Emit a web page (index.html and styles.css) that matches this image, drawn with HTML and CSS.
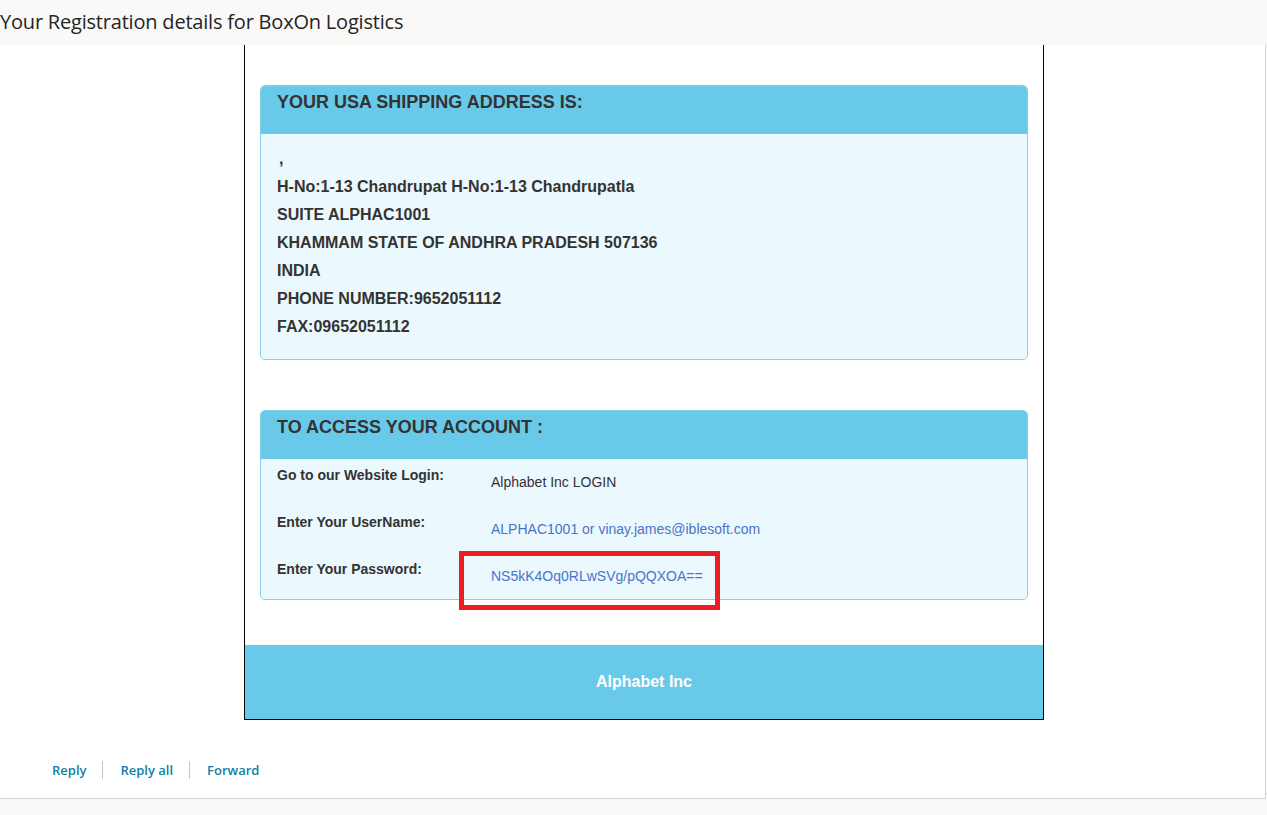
FILE: index.html
```html
<!DOCTYPE html>
<html>
<head>
<meta charset="utf-8">
<title>Your Registration details for BoxOn Logistics</title>
<link rel="stylesheet" href="styles.css">
</head>
<body>
<header class="subject-bar">
  <h1 class="subject">Your Registration details for BoxOn Logistics</h1>
</header>
<main class="reading-pane">
  <div class="mail-body">
    <div class="mail-frame">
      <section class="card card-address">
        <h3 class="card-head">YOUR USA SHIPPING ADDRESS IS:</h3>
        <div class="card-body address">
          <p><span class="lead-gap"></span>,</p>
          <p>H-No:1-13 Chandrupat H-No:1-13 Chandrupatla</p>
          <p>SUITE ALPHAC1001</p>
          <p>KHAMMAM STATE OF ANDHRA PRADESH 507136</p>
          <p>INDIA</p>
          <p>PHONE NUMBER:9652051112</p>
          <p>FAX:09652051112</p>
        </div>
      </section>
      <section class="card card-account">
        <h3 class="card-head">TO ACCESS YOUR ACCOUNT :</h3>
        <div class="card-body account">
          <div class="row">
            <span class="label">Go to our Website Login:</span>
            <span class="value dark">Alphabet Inc LOGIN</span>
          </div>
          <div class="row">
            <span class="label">Enter Your UserName:</span>
            <span class="value link">ALPHAC1001 or vinay.james@iblesoft.com</span>
          </div>
          <div class="row">
            <span class="label">Enter Your Password:</span>
            <span class="value link">NS5kK4Oq0RLwSVg/pQQXOA==</span>
          </div>
          <div class="highlight"></div>
        </div>
      </section>
      <footer class="mail-footer">Alphabet Inc</footer>
    </div>
  </div>
  <nav class="actions">
    <a class="action" href="#">Reply</a>
    <a class="action" href="#">Reply all</a>
    <a class="action" href="#">Forward</a>
  </nav>
</main>
</body>
</html>
```
FILE: styles.css
```css
html, body {
  margin: 0;
  padding: 0;
}
body {
  background: #faf9f8;
  width: 1267px;
  height: 815px;
  overflow: hidden;
  font-family: "Liberation Sans", Arial, sans-serif;
}
.subject-bar {
  height: 45px;
  background: #faf9f8;
  box-sizing: border-box;
  padding-top: 9px;
}
.subject {
  margin: 0;
  font-family: "Open Sans", "Noto Sans", sans-serif;
  font-weight: 500;
  font-size: 20px;
  line-height: 26px;
  color: #242424;
  white-space: nowrap;
  letter-spacing: -0.2px;
}
.reading-pane {
  width: 1266px;
  height: 754px;
  box-sizing: border-box;
  background: #ffffff;
  border-right: 1px solid #d2d0ce;
  border-bottom: 1px solid #d2d0ce;
  display: flex;
  flex-direction: column;
}
.mail-body {
  padding-left: 244px;
}
.mail-frame {
  width: 800px;
  box-sizing: border-box;
  border: 1px solid #000;
  border-top: none;
  padding-top: 40px;
  display: flex;
  flex-direction: column;
}
.card {
  margin: 0 15px;
  border: 1px solid #86cfec;
  border-radius: 5px;
  overflow: hidden;
  background: #ebf8fd;
  position: relative;
}
.card-account {
  margin-top: 50px;
  overflow: visible;
}
.card-head {
  margin: 0;
  height: 48px;
  box-sizing: border-box;
  background: #69c9e9;
  color: #333333;
  font-size: 18px;
  font-weight: bold;
  line-height: 20px;
  padding: 6px 16px 0 16px;
  border-radius: 4px 4px 0 0;
}
.card-body {
  color: #333333;
}
.address {
  padding: 11px 16px 18px;
}
.address p {
  margin: 0;
  font-size: 16px;
  font-weight: bold;
  line-height: 28px;
}
.lead-gap {
  display: inline-block;
  width: 2px;
}
.account {
  padding: 8px 16px 15px;
  display: flex;
  flex-direction: column;
  gap: 24px;
  border-radius: 0 0 4px 4px;
}
.row {
  display: flex;
  height: 23px;
  font-size: 14px;
  line-height: 16px;
}
.label {
  width: 214px;
  font-weight: bold;
  color: #333333;
}
.value {
  padding-top: 7px;
}
.value.dark {
  color: #333333;
}
.value.link {
  color: #4a74c9;
}
.highlight {
  position: absolute;
  left: 198px;
  top: 140px;
  width: 261px;
  height: 59px;
  box-sizing: border-box;
  border: 5px solid #ec1c24;
}
.mail-footer {
  margin-top: 45px;
  height: 74px;
  background: #69c9e9;
  color: #ffffff;
  font-weight: bold;
  font-size: 16px;
  display: flex;
  align-items: center;
  justify-content: center;
}
.actions {
  display: flex;
  align-items: center;
  margin-top: 41px;
  padding-left: 36px;
}
.action {
  font-family: "Open Sans", "Noto Sans", sans-serif;
  font-size: 13px;
  font-weight: 600;
  line-height: 18px;
  color: #0f7fa6;
  text-decoration: none;
  padding: 0 16px 0 17px;
  border-left: 1px solid #c8c6c4;
}
.action:first-child {
  border-left: none;
  padding-left: 16px;
}
```
